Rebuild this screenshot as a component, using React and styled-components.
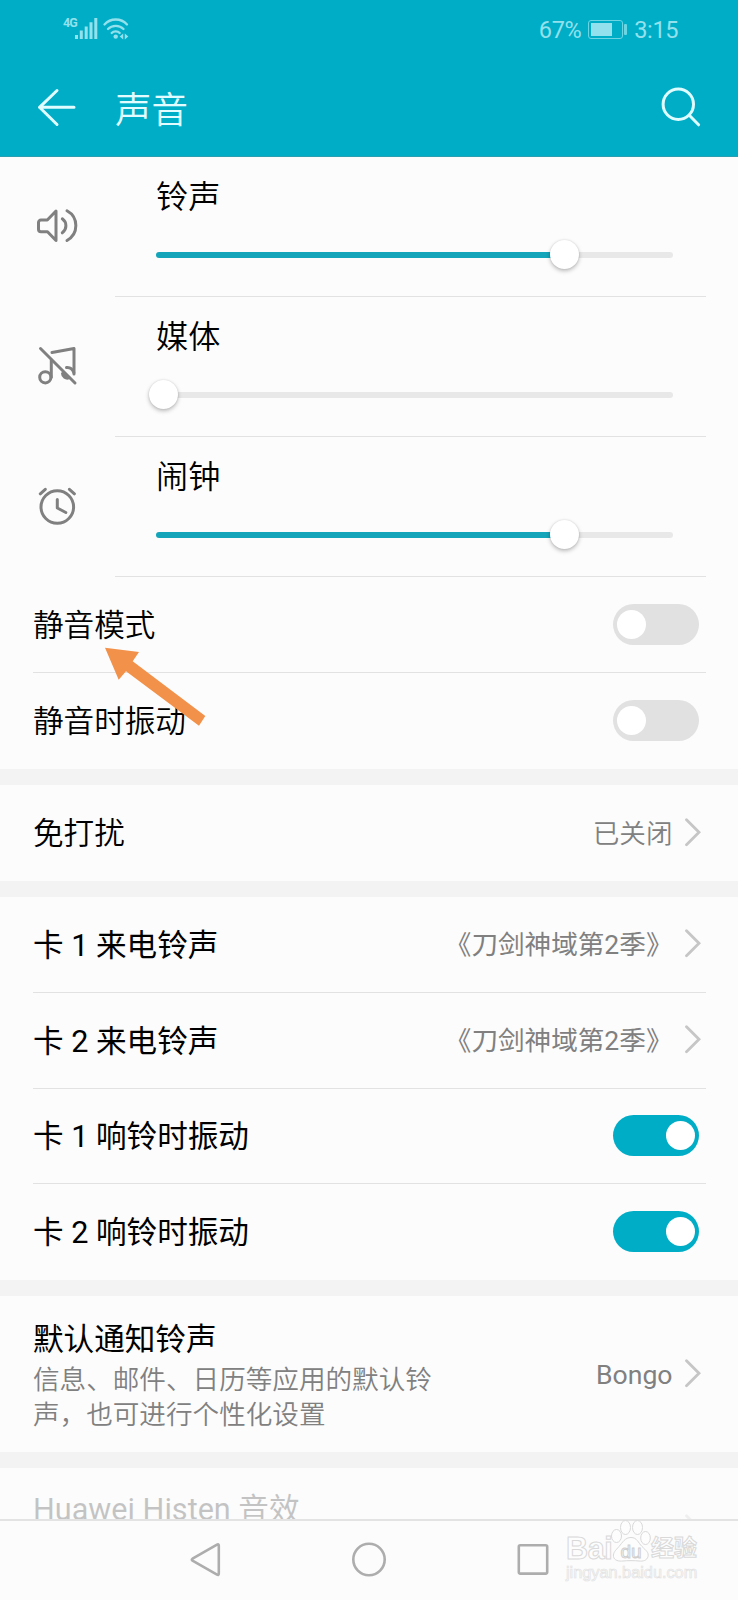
import React from "react";
import styled, { createGlobalStyle } from "styled-components";

const teal = "#00adc7";

const GlobalStyle = createGlobalStyle`
  * {
    box-sizing: border-box;
  }
  body {
    margin: 0;
    background: #fcfcfc;
    font-family: Roboto, "Noto Sans CJK SC", sans-serif;
    color: #000;
  }
  svg {
    display: block;
    flex: none;
  }
`;

const Screen = styled.div`
  position: relative;
  display: flex;
  flex-direction: column;
  width: 738px;
  height: 1600px;
  overflow: hidden;
  background: #fcfcfc;
`;

const Header = styled.header`
  flex: none;
  height: 157px;
  background: ${teal};
  border-bottom: 1px solid #2a9fb2;
`;

const StatusBar = styled.div`
  display: flex;
  justify-content: space-between;
  height: 58px;
  padding: 0 60px 0 63px;
  color: #93e1ec;
`;
const StatusGroup = styled.div`
  display: flex;
  align-items: center;
`;
const NetworkType = styled.span`
  width: 12px;
  margin-bottom: 12px;
  font-size: 12.5px;
  font-weight: 700;
  line-height: 12px;
  letter-spacing: -1px;
`;
const StatusText = styled.span`
  padding-top: 1px;
  font-size: 23.5px;
  line-height: 28px;
  letter-spacing: -0.4px;
`;
const Battery = styled.span`
  position: relative;
  width: 35px;
  height: 19px;
  margin: 0 11px 0 7px;
  padding: 2px;
  border: 1px solid #6cd5e3;
  border-radius: 3px;
  &::before {
    content: "";
    display: block;
    width: 70%;
    height: 100%;
    background: #93e1ec;
  }
  &::after {
    content: "";
    position: absolute;
    top: 3px;
    right: -5px;
    width: 3px;
    height: 11px;
    border-radius: 1px;
    background: #6cd5e3;
  }
`;

const AppBar = styled.div`
  display: flex;
  align-items: center;
  height: 98px;
  padding: 0 34px 0 33px;
`;
const Title = styled.h1`
  flex: 1;
  margin: 0 0 0 34px;
  padding-top: 7px;
  color: #e2fcff;
  font-size: 36.5px;
  font-weight: 350;
  line-height: 48px;
`;

const Content = styled.main`
  flex: 1;
  min-height: 0;
  overflow: hidden;
`;
const Section = styled.section`
  & + & {
    border-top: 16px solid #f3f3f3;
  }
`;

const VolumeRow = styled.div`
  display: grid;
  grid-template-columns: 115px 1fr;
  height: 140px;
  padding-right: 32px;
`;
const VolumeIcon = styled.div`
  padding: 45px 0 0 33px;
`;
const VolumeBody = styled.div`
  padding: 16px 33px 0 41px;
  border-bottom: 1px solid #e2e2e2;
`;
const VolumeLabel = styled.div`
  margin-bottom: 19px;
  font-size: 32.2px;
  line-height: 48px;
  font-weight: 350;
`;
const Track = styled.div`
  position: relative;
  display: flex;
  align-items: center;
  height: 29px;
  &::before {
    content: "";
    flex: 1;
    height: 6px;
    border-radius: 3px;
    background: linear-gradient(
      to right,
      #14a5ba ${({ value }) => value}%,
      #e8e8e8 ${({ value }) => value}%
    );
  }
`;
const Thumb = styled.span`
  position: absolute;
  top: 0;
  left: calc(${({ value }) => value}% - 14.5px);
  width: 29px;
  height: 29px;
  border-radius: 50%;
  background: #fff;
  box-shadow: 0 2px 4px rgba(0, 0, 0, 0.26), 0 0 2px rgba(0, 0, 0, 0.12);
`;

const Row = styled.div`
  display: flex;
  align-items: center;
  height: ${({ height }) => height || 96}px;
  margin: 0 32px 0 33px;
  border-bottom: 1px solid ${({ last }) => (last ? "transparent" : "#e2e2e2")};
  opacity: ${({ disabled }) => (disabled ? 0.22 : 1)};
`;
const RowText = styled.div`
  flex: 1;
  padding-top: 3px;
`;
const RowTitle = styled.div`
  font-size: 30.6px;
  line-height: 44px;
  font-weight: ${({ light }) => (light ? 350 : 400)};
`;
const RowHint = styled.div`
  width: 405px;
  color: #808080;
  font-size: 26.6px;
  font-weight: 350;
  line-height: 35px;
`;
const RowValue = styled.span`
  margin-right: 12.5px;
  padding-top: 2px;
  color: #808080;
  font-size: 26.6px;
  line-height: 40px;
  font-weight: ${({ light }) => (light ? 350 : 400)};
`;

// Only the top part of this row fits above the navigation bar
const PartialRow = styled(Row)`
  align-items: flex-start;
  height: 51px;
  padding-top: 17px;
  border-bottom: none;
  svg {
    margin-top: 29px;
  }
`;

const Switch = styled.span`
  display: flex;
  align-items: center;
  justify-content: ${({ on }) => (on ? "flex-end" : "flex-start")};
  width: 86px;
  height: 41px;
  margin-right: 7px;
  padding: 0 4px;
  border-radius: 21px;
  background: ${({ on }) => (on ? teal : "#e1e1e1")};
  &::before {
    content: "";
    width: 29px;
    height: 29px;
    border-radius: 50%;
    background: #fff;
  }
`;

const NavBar = styled.nav`
  display: flex;
  flex: none;
  justify-content: center;
  align-items: center;
  gap: 124px;
  height: 81px;
  padding-bottom: 2px;
  border-top: 2px solid #e3e3e3;
  background: #fcfcfc;
`;

const Pointer = styled.svg`
  position: absolute;
  top: 645px;
  left: 103px;
`;

const Watermark = styled.div`
  position: absolute;
  top: 1519px;
  left: 566px;
  width: 136px;
  color: #fdfdfd;
  font-family: "Liberation Sans", "Noto Sans CJK SC", sans-serif;
`;
const WatermarkBrand = styled.div`
  display: flex;
  align-items: flex-end;
  height: 43px;
  font-size: 30.5px;
  font-weight: 700;
  line-height: 28px;
  -webkit-text-stroke: 1px #d9d9d9;
`;
const WatermarkLatin = styled.span`
  width: 45px;
  letter-spacing: -0.4px;
`;
const WatermarkName = styled.span`
  margin-left: -1px;
  font-size: 23px;
`;
const WatermarkUrl = styled.div`
  font-size: 16.3px;
  line-height: 20px;
  white-space: nowrap;
  -webkit-text-stroke: 0.7px #e2e2e2;
`;

const Stroked = ({ size = 48, width = 3, color = "#808080", children }) => (
  <svg
    width={size}
    height={size}
    viewBox={`0 0 ${size} ${size}`}
    fill="none"
    stroke={color}
    strokeWidth={width}
    strokeLinecap="round"
    strokeLinejoin="round"
  >
    {children}
  </svg>
);

const SpeakerIcon = () => (
  <Stroked>
    <path d="M8 18H14.300L23 9v29.500l-8.500-8.700h-6.500a2.500 2.500 0 0 1-2.500-2.500v-6.800a2.500 2.500 0 0 1 2.500-2.500z" />
    <path d="M29.300 16.800a8.600 8.600 0 0 1 0 14" />
    <path d="M34 8.700c11.800 6.500 11.800 23.300 0 29.800" />
  </Stroked>
);

const MusicOffIcon = () => (
  <Stroked>
    <path d="M7.500 6.500l34.500 34.500" />
    <path d="M19 10.500L41 6.500V32" />
    <path d="M18.300 18v17.300" />
    <circle cx="12.300" cy="35.300" r="5.600" />
    <path d="M33.500 25.600c3-.3 6 1.400 7.300 5" />
    <path d="M29.500 31.500c0 3 3.500 5.600 6.500 4.200z" fill="#808080" />
  </Stroked>
);

const AlarmIcon = () => (
  <Stroked>
    <circle cx="24.300" cy="25" r="16.300" />
    <path d="M24.300 17.500v8.500l8.500 4.500M7.300 11.800l5-4.500M36.400 7.300l5 4.500" />
  </Stroked>
);

const Chevron = ({ color = "#c6c6c6" }) => (
  <svg width="21" height="30" viewBox="0 0 21 30" fill="none">
    <path
      d="M1.500 1.800l12.500 12.500L1.500 26.800"
      stroke={color}
      strokeWidth="2.800"
      strokeLinecap="round"
    />
  </svg>
);

const volumes = [
  { label: "铃声", value: 79.1, Icon: SpeakerIcon },
  { label: "媒体", value: 1.5, Icon: MusicOffIcon },
  { label: "闹钟", value: 79.1, Icon: AlarmIcon },
];

const LinkRow = ({ title, hint, value, light, ...rest }) => (
  <Row {...rest}>
    <RowText>
      <RowTitle light={light}>{title}</RowTitle>
      {hint && <RowHint>{hint}</RowHint>}
    </RowText>
    <RowValue light={light}>{value}</RowValue>
    <Chevron />
  </Row>
);

const SwitchRow = ({ title, on, light, ...rest }) => (
  <Row {...rest}>
    <RowText>
      <RowTitle light={light}>{title}</RowTitle>
    </RowText>
    <Switch on={on} />
  </Row>
);

const App = () => (
  <Screen>
    <GlobalStyle />
    <Header>
      <StatusBar>
        <StatusGroup>
          <NetworkType>4G</NetworkType>
          <svg width="54" height="24" viewBox="0 0 54 24" fill="none">
            <g stroke="#93e1ec" strokeWidth="3">
              <path d="M1.500 18v4M6.300 13.500V22M11.200 9.500V22M16 5.200V22M20.800 1V22" />
            </g>
            <g stroke="#93e1ec" strokeWidth="2.300" strokeLinecap="round">
              <path d="M29.500 7.500c6-6.700 16.500-6.700 22.500 0" />
              <path d="M33 12c4-4.300 11.500-4.300 15.500 0" />
              <path d="M36.700 16c2-2.200 6-2.200 8 0" />
            </g>
            <g fill="#93e1ec">
              <circle cx="40.700" cy="19.600" r="2.200" />
              <path d="M48.200 16.500v6l-3.500-3zM49.800 16.500v6l3.500-3z" />
            </g>
          </svg>
        </StatusGroup>
        <StatusGroup>
          <StatusText>67%</StatusText>
          <Battery />
          <StatusText>3:15</StatusText>
        </StatusGroup>
      </StatusBar>
      <AppBar>
        <Stroked color="#dffcff">
          <path d="M41 24.300H6.500M24 7.500L6.500 24.300 24 41.500" />
        </Stroked>
        <Title>声音</Title>
        <Stroked color="#dffcff">
          <circle cx="22.300" cy="21.300" r="15.200" />
          <path d="M33.300 32.300l9.300 9.500" />
        </Stroked>
      </AppBar>
    </Header>

    <Content>
      <Section>
        {volumes.map(({ label, value, Icon }) => (
          <VolumeRow key={label}>
            <VolumeIcon>
              <Icon />
            </VolumeIcon>
            <VolumeBody>
              <VolumeLabel>{label}</VolumeLabel>
              <Track value={value}>
                <Thumb value={value} />
              </Track>
            </VolumeBody>
          </VolumeRow>
        ))}
        <SwitchRow title="静音模式" light />
        <SwitchRow title="静音时振动" light last />
      </Section>
      <Section>
        <LinkRow title="免打扰" value="已关闭" light last />
      </Section>
      <Section>
        <LinkRow title="卡 1 来电铃声" value="《刀剑神域第2季》" height={95.75} />
        <LinkRow title="卡 2 来电铃声" value="《刀剑神域第2季》" height={95.75} />
        <SwitchRow title="卡 1 响铃时振动" on height={95.75} />
        <SwitchRow title="卡 2 响铃时振动" on height={95.75} last />
      </Section>
      <Section>
        <LinkRow
          title="默认通知铃声"
          hint="信息、邮件、日历等应用的默认铃声，也可进行个性化设置"
          value="Bongo"
          height={156}
          last
        />
      </Section>
      <Section>
        <PartialRow disabled>
          <RowText>
            <RowTitle>Huawei Histen 音效</RowTitle>
          </RowText>
          <Chevron />
        </PartialRow>
      </Section>
    </Content>

    <NavBar>
      <Stroked size={40} width={2.6} color="#adadad">
        <path d="M7.500 18.700L32 4.600q1.800-.9 1.800 1v28q0 1.900-1.800 1L7.500 20.700q-1.400-1 0-2z" />
      </Stroked>
      <Stroked size={40} width={2.6} color="#adadad">
        <circle cx="20" cy="19.500" r="15.700" />
      </Stroked>
      <Stroked size={40} width={2.6} color="#adadad">
        <rect x="5.800" y="5.200" width="28.400" height="28.400" rx="1.500" />
      </Stroked>
    </NavBar>

    <Pointer width="106" height="84" viewBox="103 645 106 84">
      <path
        d="M105 647.700L139 652l-6.300 9.300 72.600 54.700-6.300 9.700-73-54.400-7.300 8.400z"
        fill="#f29149"
      />
    </Pointer>

    <Watermark>
      <WatermarkBrand>
        <WatermarkLatin>Bai</WatermarkLatin>
        <svg width="41" height="44" viewBox="0 0 41 44">
          <g fill="#fdfdfd" stroke="#d9d9d9">
            <ellipse cx="5.500" cy="18" rx="5" ry="6.500" />
            <ellipse cx="14.500" cy="9.500" rx="5" ry="7" />
            <ellipse cx="26.500" cy="9.500" rx="5" ry="7" />
            <ellipse cx="34.500" cy="20" rx="4.800" ry="6.500" />
            <path d="M20 19.500c6 0 7 5 11 9s7 6 6 10-5 5-9 4.500-12-.5-16 0-9-.5-9.500-4.500 2-6 5.500-10 6-9 12-9z" />
          </g>
          <text
            x="9.500"
            y="39.500"
            fontSize="19"
            fontWeight="400"
            fill="#fdfdfd"
            stroke="#cfcfcf"
          >
            du
          </text>
        </svg>
        <WatermarkName>经验</WatermarkName>
      </WatermarkBrand>
      <WatermarkUrl>jingyan.baidu.com</WatermarkUrl>
    </Watermark>
  </Screen>
);

export default App;
